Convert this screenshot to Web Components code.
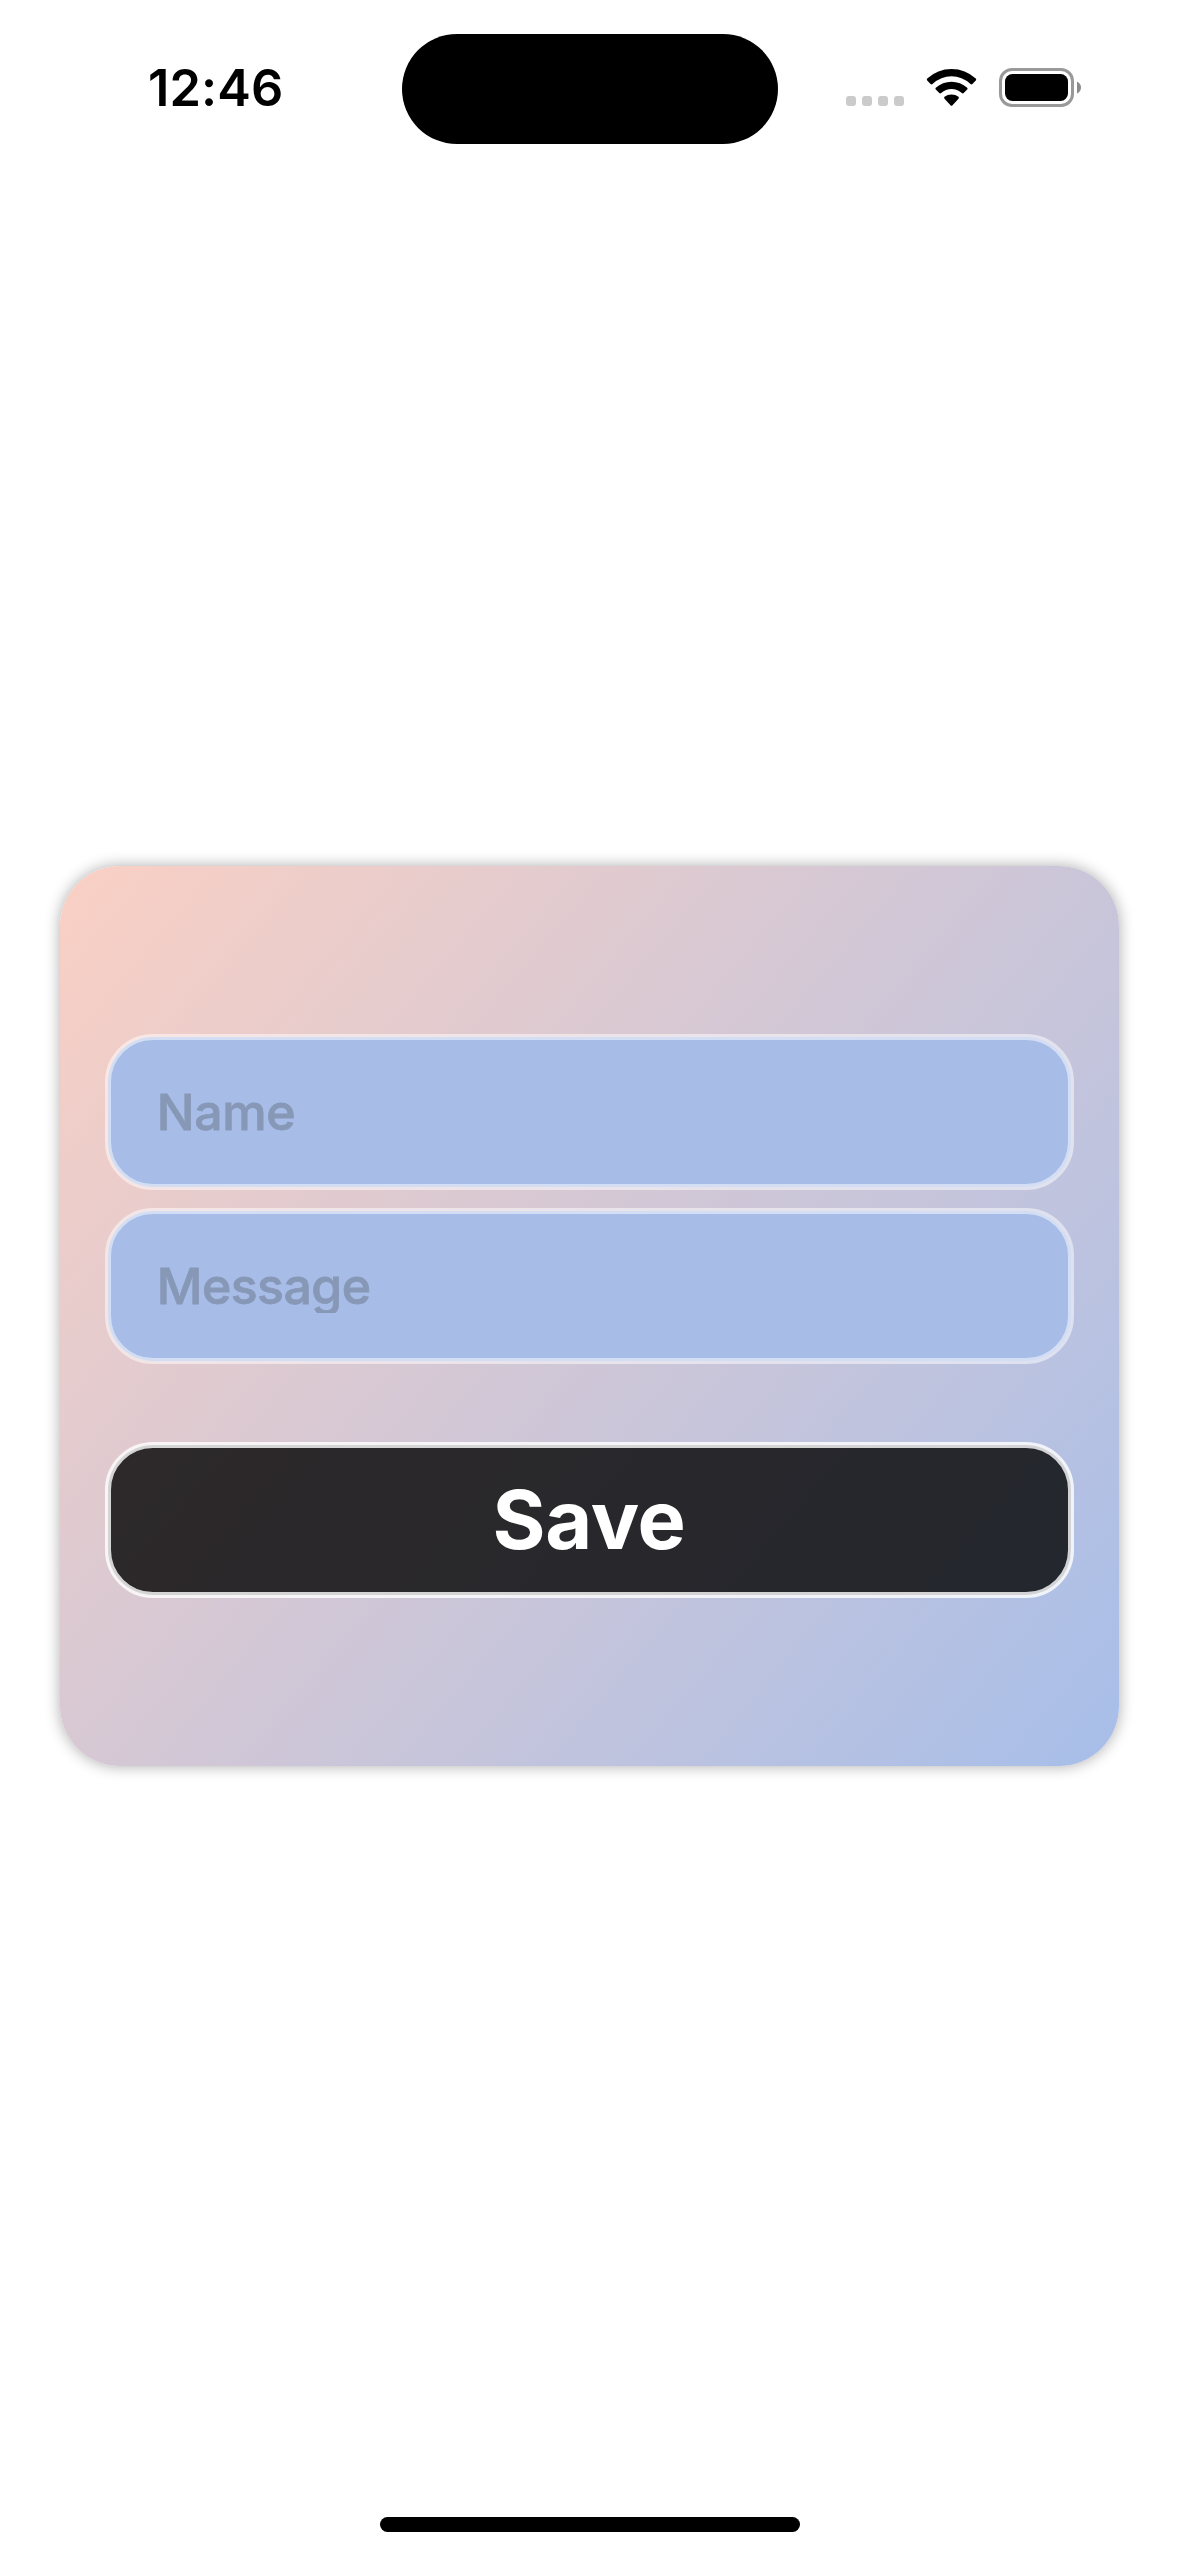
<!DOCTYPE html>
<html lang="en">
<head>
<meta charset="utf-8">
<title>Save form</title>
<style>
html,body{margin:0;background:#fff}
body{width:1179px;height:2556px;overflow:hidden;font-family:Inter,"Liberation Sans",sans-serif}
</style>
</head>
<body>
<app-screen>
  <status-bar slot="top" time="12:46"></status-bar>
  <form-card>
    <text-field style="--tracking:-0.4px">Name</text-field>
    <text-field style="--tracking:-0.55px">Message</text-field>
    <save-button>Save</save-button>
  </form-card>
  <home-indicator slot="bottom"></home-indicator>
</app-screen>
<script>
const define = (name, html, init) => customElements.define(name, class extends HTMLElement {
  constructor() {
    super();
    const root = this.attachShadow({ mode: 'open' });
    root.innerHTML = html;
    if (init) init(this, root);
  }
});

define('app-screen', `
<style>
:host{display:flex;flex-direction:column;width:1179px;height:2556px;background:#fff}
main{flex:1;display:flex;flex-direction:column;padding:689px 60px 0}
</style>
<slot name="top"></slot><main><slot></slot></main><slot name="bottom"></slot>`);

define('status-bar', `
<style>
:host{display:flex;height:177px;box-sizing:border-box;padding:33.5px 97px 0 148px;align-items:flex-start}
.time{width:253.5px;margin-top:23.5px;font-size:50.5px;line-height:61px;font-weight:600;letter-spacing:.1px;color:#000;white-space:nowrap}
.island{width:376px;height:110.5px;border-radius:56px;background:#000}
svg{display:block;margin:24.5px 0 0 66.5px}
</style>
<div class="time"></div>
<div class="island"></div>
<svg width="238" height="60" viewBox="844 58 238 60">
  <g fill="#cbcbcb">
    <rect x="846" y="96" width="10" height="10" rx="3"/>
    <rect x="862" y="96" width="10" height="10" rx="3"/>
    <rect x="878" y="96" width="10" height="10" rx="3"/>
    <rect x="894" y="96" width="10" height="10" rx="3"/>
  </g>
  <path d="M927.2 78.6Q926.3 79.6 927.2 80.6L930.6 84Q931.5 84.9 932.5 84Q941 76.3 951.5 76.3T970.5 84Q971.5 84.9 972.4 84L975.8 80.6Q976.7 79.6 975.8 78.6Q965.5 69 951.5 69T927.2 78.6Z"/>
  <path d="M935.8 87.8Q934.9 88.7 935.8 89.6L939.3 93Q940.2 93.9 941.2 93Q945.8 89 951.5 89T961.8 93Q962.8 93.9 963.7 93L967.2 89.6Q968.1 88.7 967.2 87.8Q960.5 81.8 951.5 81.8T935.8 87.8Z"/>
  <path d="M944.5 96.8Q943.6 97.8 944.5 98.7L950.5 105.2Q951.5 106.2 952.5 105.2L958.5 98.7Q959.4 97.8 958.5 96.8Q955.5 94.4 951.5 94.4T944.5 96.8Z"/>
  <rect x="1000.5" y="69.5" width="72" height="36" rx="11.5" fill="none" stroke="#999" stroke-width="3"/>
  <rect x="1005" y="74" width="63" height="27" rx="7.5"/>
  <path d="M1077 81.5Q1081 83.5 1081 87.5T1077 93.5Z" fill="#8c8c8c"/>
</svg>`, (el, root) => { root.querySelector('.time').textContent = el.getAttribute('time'); });

define('form-card', `
<style>
:host{display:flex;flex-direction:column;gap:18px;box-sizing:border-box;height:900px;padding:168px 45px 0;border-radius:60px;
background:linear-gradient(130.36deg,#fad0c4,#a7bee9);box-shadow:0 0 15px rgba(0,0,0,.33)}
</style>
<slot></slot>`);

define('text-field', `
<style>
:host{display:flex;align-items:flex-start;box-sizing:border-box;height:156px;position:relative}
.fill{position:absolute;inset:3px;border-radius:45px;background:#a7bde8}
.ring{position:absolute;inset:0;border-radius:48px;border:6px solid rgba(255,255,255,.5)}
.text{position:relative;margin:48px 0 0 51.8px;height:57px;overflow:hidden;font-size:50px;line-height:61px;font-weight:500;
letter-spacing:var(--tracking,0);color:#8798b7;-webkit-text-stroke:.8px #8798b7;white-space:nowrap}
</style>
<div class="fill"></div><div class="ring"></div><div class="text"><slot></slot></div>`);

define('save-button', `
<style>
:host{display:flex;justify-content:center;box-sizing:border-box;height:156px;margin-top:60px;padding-top:29px;position:relative;
font-size:81px;line-height:98px;font-weight:700;letter-spacing:-.3px;color:#fff}
.fill{position:absolute;inset:3px;border-radius:45px;background:rgba(0,0,0,.8)}
.ring{position:absolute;inset:0;border-radius:48px;border:6px solid rgba(255,255,255,.8)}
span{position:relative;margin-right:1px}
</style>
<div class="fill"></div><div class="ring"></div><span><slot></slot></span>`);

define('home-indicator', `
<style>
:host{display:flex;justify-content:center;height:39px}
i{width:420px;height:15px;border-radius:7.5px;background:#000}
</style><i></i>`);
</script>
</body>
</html>
